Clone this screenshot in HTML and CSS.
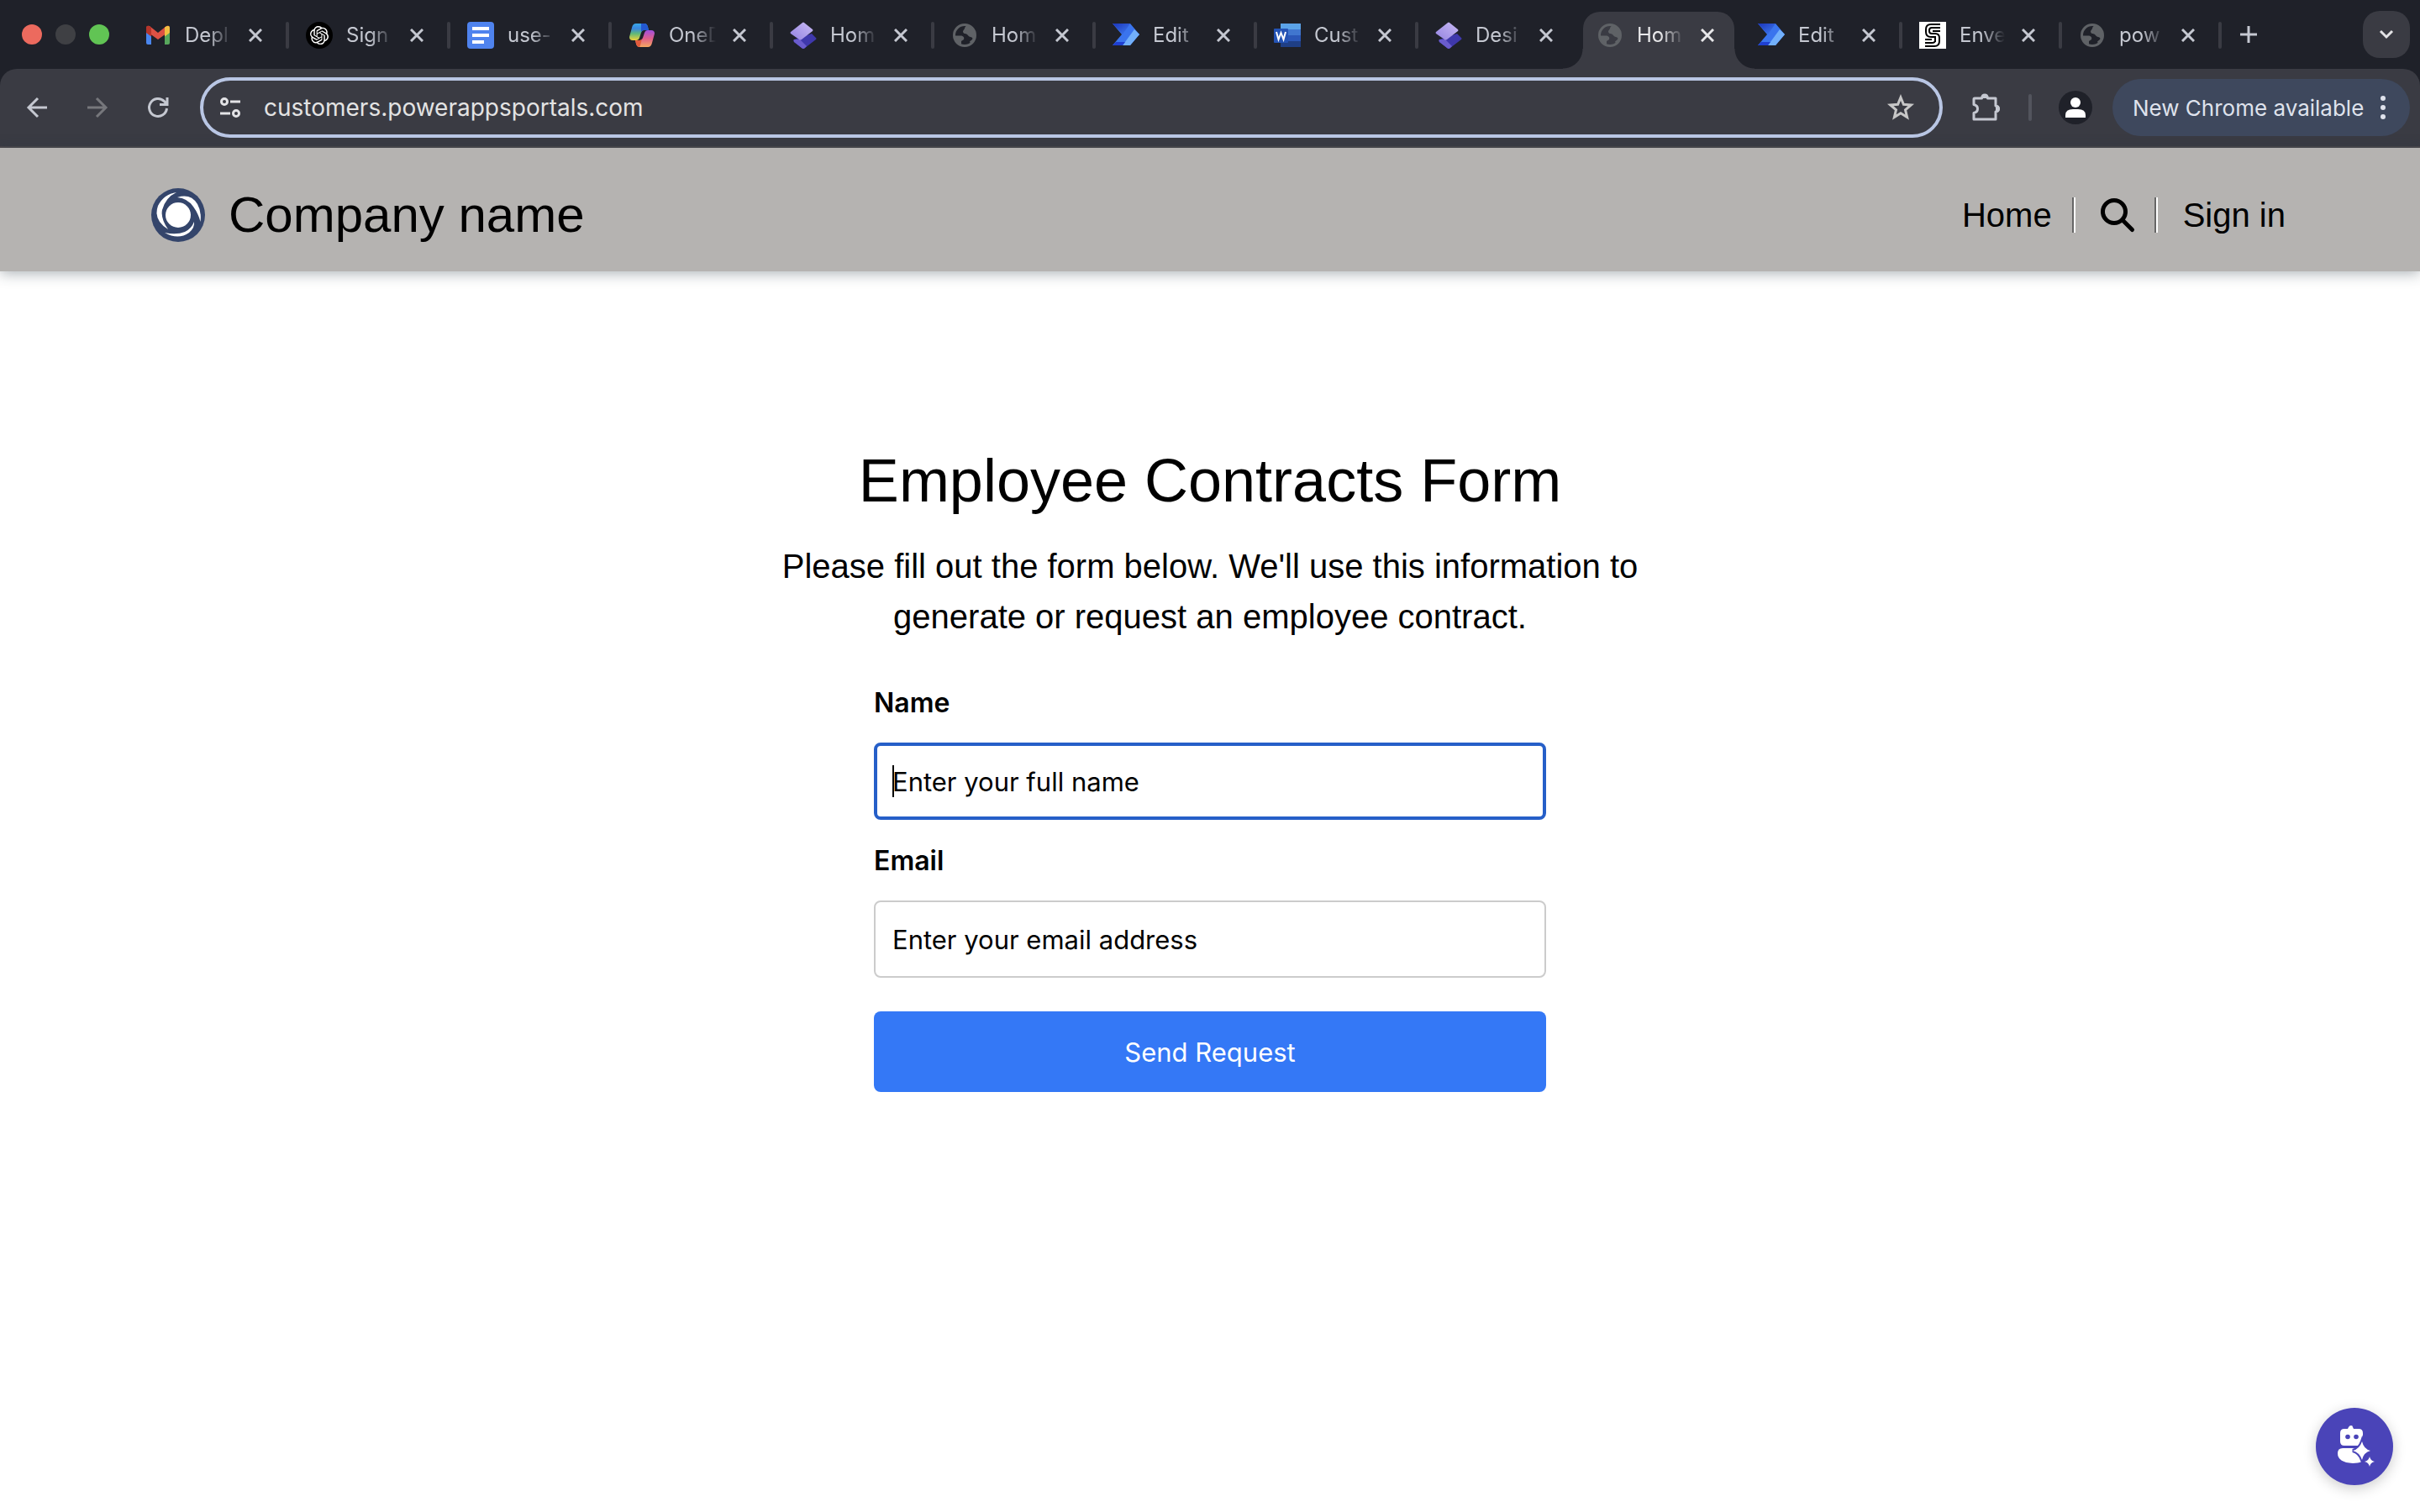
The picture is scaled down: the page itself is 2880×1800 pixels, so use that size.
FILE: index.html
```html
<!DOCTYPE html>
<html lang="en">
<head>
<meta charset="utf-8">
<title>Home · Company name</title>
<link rel="stylesheet" href="styles.css">
</head>
<body>
<svg class="defs" aria-hidden="true">
  <defs>
    <linearGradient id="copilot-a" x1="0" y1="0" x2="0" y2="1"><stop offset="0" stop-color="#38a9e8"/><stop offset=".3" stop-color="#3a86e0"/><stop offset=".6" stop-color="#5fb878"/><stop offset="1" stop-color="#f0d23a"/></linearGradient>
    <linearGradient id="copilot-b" x1="0" y1="0" x2="0" y2="1"><stop offset="0" stop-color="#a04fe0"/><stop offset=".5" stop-color="#e0608a"/><stop offset="1" stop-color="#f5a860"/></linearGradient>
    <linearGradient id="pages-a" x1="0" y1="1" x2="1" y2="0"><stop offset="0" stop-color="#9383e0"/><stop offset="1" stop-color="#c9baf5"/></linearGradient>
    <linearGradient id="flow-a" x1="0" y1="0" x2="1" y2="1"><stop offset="0" stop-color="#1b34b8"/><stop offset="1" stop-color="#3f7df2"/></linearGradient>
    <symbol id="close" viewBox="0 0 16 16"><path d="M1 1l14 14M15 1L1 15" fill="none" stroke="currentColor" stroke-width="3"/></symbol>
    <symbol id="globe" viewBox="0 0 32 32"><circle cx="16" cy="16" r="12.5" fill="none" stroke="#5f6266" stroke-width="3"/><path d="M3.5 16.500H11c3 0 5 1.500 4 4.500l-3 2v5.500C7 27 3.500 22 3.500 16.500zM19 4.500c-2 .5-3 2-3 3.500l-2 3c0 3 2 3 4 3.500 2 .5 2 3 5 3.500 2 .3 3 1.500 2 3l-3 2.500 1 2c4-2 6-6 6-10C29 10 25 5 19 4.500z" fill="#5f6266"/></symbol>
    <symbol id="pages" viewBox="0 0 32 32"><path d="M26 14l5 5q1 1 0 2L18 31q-2 2-4 0L5 24q-1-2 0-3z" fill="#3f38ac"/><path d="M5 21h7l8 8-2 2q-2 2-4 0L5 24q-1-2 0-3z" fill="#6a5ccd"/><path d="M15 1q1-1 2 0l10 8q1 1 0 2L14 21q-2 1-3 0L1 14q-1-1 0-2z" fill="url(#pages-a)"/></symbol>
    <symbol id="flow" viewBox="0 0 32 32"><path d="M0 2h21l11 13-11 13H0l11-13z" fill="#3a74ee"/><path d="M0 2h21l-9 13z" fill="url(#flow-a)"/><path d="M26 9l6 6-11 13H12z" fill="#72b0fb"/><path d="M0 28h12l3-4H4z" fill="#1f3fd0"/></symbol>
  </defs>
</svg>

<header class="browser">
  <div class="tabstrip">
    <div class="lights"><span class="light light-close"></span><span class="light light-min"></span><span class="light light-max"></span></div>
    <ul class="tabs">
      <li class="tab"><svg class="favicon" viewBox="0 0 32 32"><path d="M2 8v17q0 2 2 2h4V12z" fill="#4a86ee"/><path d="M30 8v17q0 2-2 2h-4V12z" fill="#57a75c"/><path d="M2 8q0-4 4-3l10 8 10-8q4-1 4 3v3L16 21 2 11z" fill="#dd5144"/><path d="M24 6.500q6-4 6 1.500v5l-6 4.500z" fill="#f2bf42"/><path d="M8 6.500Q2 2.500 2 8v5l6 4.500z" fill="#b5352b"/></svg><span class="tab-title">Depl</span><button class="tab-close" aria-label="Close tab"><svg><use href="#close"/></svg></button></li>
      <li class="tab"><svg class="favicon" viewBox="0 0 32 32"><circle cx="16" cy="16" r="16" fill="#000"/><path transform="translate(5 5) scale(.92)" fill="#fff" d="M22.2819 9.8211a5.9847 5.9847 0 0 0-.5157-4.9108 6.0462 6.0462 0 0 0-6.5098-2.9A6.0651 6.0651 0 0 0 4.9807 4.1818a5.9847 5.9847 0 0 0-3.9977 2.9 6.0462 6.0462 0 0 0 .7427 7.0966 5.98 5.98 0 0 0 .511 4.9107 6.051 6.051 0 0 0 6.5146 2.9001A5.9847 5.9847 0 0 0 13.2599 24a6.0557 6.0557 0 0 0 5.7718-4.2058 5.9894 5.9894 0 0 0 3.9977-2.9001 6.0557 6.0557 0 0 0-.7475-7.073zm-9.022 12.6081a4.4755 4.4755 0 0 1-2.8764-1.0408l.1419-.0804 4.7783-2.7582a.7948.7948 0 0 0 .3927-.6813v-6.7369l2.02 1.1686a.071.071 0 0 1 .038.052v5.5826a4.504 4.504 0 0 1-4.4945 4.4944zm-9.6607-4.1254a4.4708 4.4708 0 0 1-.5346-3.0137l.142.0852 4.783 2.7582a.7712.7712 0 0 0 .7806 0l5.8428-3.3685v2.3324a.0804.0804 0 0 1-.0332.0615L9.74 19.9502a4.4992 4.4992 0 0 1-6.1408-1.6464zM2.3408 7.8956a4.485 4.485 0 0 1 2.3655-1.9728V11.6a.7664.7664 0 0 0 .3879.6765l5.8144 3.3543-2.0201 1.1685a.0757.0757 0 0 1-.071 0l-4.8303-2.7865A4.504 4.504 0 0 1 2.3408 7.872zm16.5963 3.8558L13.1038 8.364 15.1192 7.2a.0757.0757 0 0 1 .071 0l4.8303 2.7913a4.4944 4.4944 0 0 1-.6765 8.1042v-5.6772a.79.79 0 0 0-.407-.667zm2.0107-3.0231l-.142-.0852-4.7735-2.7818a.7759.7759 0 0 0-.7854 0L9.409 9.2297V6.8974a.0662.0662 0 0 1 .0284-.0615l4.8303-2.7866a4.4992 4.4992 0 0 1 6.6802 4.66zM8.3065 12.863l-2.02-1.1638a.0804.0804 0 0 1-.038-.0567V6.0742a4.4992 4.4992 0 0 1 7.3757-3.4537l-.142.0805L8.704 5.459a.7948.7948 0 0 0-.3927.6813zm1.0976-2.3654l2.602-1.4998 2.6069 1.4998v2.9994l-2.5974 1.4997-2.6067-1.4997Z"/></svg><span class="tab-title">Sign</span><button class="tab-close" aria-label="Close tab"><svg><use href="#close"/></svg></button></li>
      <li class="tab"><svg class="favicon" viewBox="0 0 32 32"><rect width="32" height="32" rx="4" fill="#4f83ee"/><path d="M6 8h20M6 16h20M6 24h14" stroke="#fff" stroke-width="4"/></svg><span class="tab-title">use-</span><button class="tab-close" aria-label="Close tab"><svg><use href="#close"/></svg></button></li>
      <li class="tab"><svg class="favicon" viewBox="0 0 32 32"><path d="M9 2h10q3 0 4 4l1 4h-6q-2 0-3 3l-2 6q-1 3-4 3H5q-4 0-4-4L4 7q1-5 5-5z" fill="url(#copilot-a)"/><path d="M15 2h4q3 0 4 4l1 4h-6q-2 0-3 2z" fill="#2358d0"/><path d="M23 30H13q-3 0-4-4l-1-4h5q3 0 4-3l2-6q1-3 4-3h4q4 0 4 4l-3 11q-1 5-5 5z" fill="url(#copilot-b)"/><path d="M8 22h5q2 0 3-2l-2 8-1 2q-3 0-4-4z" fill="#e25b3c"/></svg><span class="tab-title">OneD</span><button class="tab-close" aria-label="Close tab"><svg><use href="#close"/></svg></button></li>
      <li class="tab"><svg class="favicon"><use href="#pages"/></svg><span class="tab-title">Hom</span><button class="tab-close" aria-label="Close tab"><svg><use href="#close"/></svg></button></li>
      <li class="tab"><svg class="favicon"><use href="#globe"/></svg><span class="tab-title">Hom</span><button class="tab-close" aria-label="Close tab"><svg><use href="#close"/></svg></button></li>
      <li class="tab"><svg class="favicon"><use href="#flow"/></svg><span class="tab-title">Edit</span><button class="tab-close" aria-label="Close tab"><svg><use href="#close"/></svg></button></li>
      <li class="tab"><svg class="favicon" viewBox="0 0 32 32"><path d="M8 2h24v7H8z" fill="#5ba3e8"/><path d="M8 9h24v7H8z" fill="#4076cf"/><path d="M8 16h24v7H8z" fill="#2b57b8"/><path d="M8 23h24v7H8z" fill="#1f3f86"/><rect y="8" width="17" height="17" rx="1" fill="#2453b4"/><path d="M3 12l2.500 9 3-8 3 8L14 12" fill="none" stroke="#fff" stroke-width="2"/></svg><span class="tab-title">Cust</span><button class="tab-close" aria-label="Close tab"><svg><use href="#close"/></svg></button></li>
      <li class="tab tab-plain"><svg class="favicon"><use href="#pages"/></svg><span class="tab-title">Desi</span><button class="tab-close" aria-label="Close tab"><svg><use href="#close"/></svg></button></li>
      <li class="tab tab-plain tab-active"><svg class="favicon"><use href="#globe"/></svg><span class="tab-title">Hom</span><button class="tab-close" aria-label="Close tab"><svg><use href="#close"/></svg></button></li>
      <li class="tab"><svg class="favicon"><use href="#flow"/></svg><span class="tab-title">Edit</span><button class="tab-close" aria-label="Close tab"><svg><use href="#close"/></svg></button></li>
      <li class="tab tab-narrow"><svg class="favicon" viewBox="0 0 32 32"><path d="M0 0h32v32H0z" fill="#fff"/><g fill="none" stroke="#000" stroke-width="2"><path d="M25 3H14q-6 0-6 6v3q0 6 6 6h5v6M25 7H15q-3 0-3 3v1q0 3 3 3h4q5 0 5 5v4q0 6-6 6H7M25 11h-9M7 25h8q4 0 4-3M7 21h8"/></g></svg><span class="tab-title">Enve</span><button class="tab-close" aria-label="Close tab"><svg><use href="#close"/></svg></button></li>
      <li class="tab tab-narrow"><svg class="favicon"><use href="#globe"/></svg><span class="tab-title">pow</span><button class="tab-close" aria-label="Close tab"><svg><use href="#close"/></svg></button></li>
    </ul>
    <button class="new-tab" aria-label="New tab"><svg viewBox="0 0 20 20"><path d="M10 0v20M0 10h20" stroke="currentColor" stroke-width="3"/></svg></button>
    <button class="tab-search" aria-label="Search tabs"><svg viewBox="0 0 16 10"><path d="M1 1l7 7 7-7" fill="none" stroke="currentColor" stroke-width="3"/></svg></button>
  </div>

  <div class="toolbar">
    <div class="nav-buttons">
      <button class="nav-button" aria-label="Back"><svg viewBox="0 0 24 24"><path d="M24 12H2M13 1L2 12l11 11" fill="none" stroke="currentColor" stroke-width="3"/></svg></button>
      <button class="nav-button nav-disabled" aria-label="Forward"><svg viewBox="0 0 24 24"><path d="M0 12h22M11 1l11 11-11 11" fill="none" stroke="currentColor" stroke-width="3"/></svg></button>
      <button class="nav-button" aria-label="Reload"><svg viewBox="0 0 24 24"><path d="M22.500 13A10.500 10.500 0 1 1 19.500 4.600L22 7.500M23 0v8.500h-9" fill="none" stroke="currentColor" stroke-width="3"/></svg></button>
    </div>
    <div class="address">
      <svg class="tune" viewBox="0 0 24 24" aria-hidden="true"><g fill="none" stroke="currentColor" stroke-width="3"><circle cx="5" cy="5" r="3.500"/><path d="M12 5h12M0 19h12"/><circle cx="19" cy="19" r="3.500"/></g></svg>
      <input class="url" type="text" aria-label="Address" value="customers.powerappsportals.com">
      <button class="star" aria-label="Bookmark this page"><svg viewBox="0 0 32 32"><path d="M16 4l3.400 8.300 8.900.7-6.800 5.800 2.100 8.700L16 22.800l-7.600 4.700 2.100-8.700L3.700 13l8.900-.7z" fill="none" stroke="currentColor" stroke-width="3"/></svg></button>
    </div>
    <button class="extensions" aria-label="Extensions"><svg viewBox="0 0 34 34"><path d="M4 6h8.500q.500-4 3.500-4t3.500 4H29v9q3.500.5 3.500 3.500T29 22v9H3v-7.500q4.500-1 4.500-5T3 13.500V7q0-1 1-1z" fill="none" stroke="currentColor" stroke-width="3" stroke-linejoin="round"/><path d="M12.500 6q0-5 3.500-5t3.500 5zM29 15q5 0 5 3.500T29 22z" fill="currentColor"/></svg></button>
    <span class="divider"></span>
    <button class="profile" aria-label="Profile"><svg viewBox="0 0 24 24"><circle cx="12" cy="6" r="6" fill="#fff"/><path d="M0 24v-3q0-7 9-7h6q9 0 9 7v3z" fill="#fff"/></svg></button>
    <button class="update">New Chrome available<svg viewBox="0 0 6 28"><circle cx="3" cy="3" r="3"/><circle cx="3" cy="14" r="3"/><circle cx="3" cy="25" r="3"/></svg></button>
  </div>
</header>

<div class="site-header">
  <a class="brand" href="#"><svg class="logo" viewBox="0 0 64 64"><circle cx="32" cy="32" r="32" fill="#34456b"/><circle cx="32" cy="32" r="15" fill="#fff"/><g fill="#fff"><path d="M30 5Q15 7 8 21q-6 17 12 28Q11 36 13 26 17 11 30 5z"/><path d="M31 11Q47 6 55 19q5 9 3.500 21Q56 30 50 22 43 12 31 11z"/><path d="M16 53q14 3 24-1 8-4 11-12 1 7-6 13-13 9-29 0z"/></g></svg><span class="brand-name">Company name</span></a>
  <nav class="site-nav">
    <a class="nav-link" href="#">Home</a>
    <span class="nav-rule"></span>
    <button class="nav-search" aria-label="Search"><svg viewBox="0 0 40 40"><circle cx="16" cy="16" r="13.500" fill="none" stroke="#000" stroke-width="5"/><path d="M26 26l11.500 11.500" stroke="#000" stroke-width="5" stroke-linecap="round"/></svg></button>
    <span class="nav-rule"></span>
    <a class="nav-link nav-signin" href="#">Sign in</a>
  </nav>
</div>

<main class="page">
  <h1 class="title">Employee Contracts Form</h1>
  <p class="intro">Please fill out the form below. We'll use this information to generate or request an employee contract.</p>
  <form class="form">
    <label class="label" for="name">Name</label>
    <input class="field" id="name" type="text" placeholder="Enter your full name" autofocus>
    <label class="label" for="email">Email</label>
    <input class="field" id="email" type="email" placeholder="Enter your email address">
    <button class="submit" type="submit">Send Request</button>
  </form>
</main>

<button class="chat" aria-label="Open chat"><svg viewBox="0 0 44 48"><g fill="#fff"><path d="M12 3l1-2q1-2 3-2t2 2l1 2h6q5 0 5 5v10q0 5-5 5H8q-5 0-5-5V8q0-5 5-5z"/><path d="M6 26h24v16q-6 2-12 2Q0 43 0 32q0-6 6-6z"/></g><circle cx="12" cy="12.500" r="2.800" fill="#4a44b8"/><circle cx="22" cy="12.500" r="2.800" fill="#4a44b8"/><path d="M29 18q2 9 10 11-8 2-10 11-3-9-11-11 8-2 11-11z" fill="#fff" stroke="#4a44b8" stroke-width="4" paint-order="stroke"/><path d="M38 36q1 5 6 6-5 1-6 6-1-5-6-6 5-1 6-6z" fill="#fff"/></svg></button>
</body>
</html>
```
FILE: styles.css
```css
* { box-sizing: border-box; }

body {
  margin: 0;
  min-height: 100vh;
  background: #fff;
  color: #000;
  font-family: "Liberation Sans", Arial, sans-serif;
}

button {
  padding: 0;
  border: 0;
  background: none;
  color: inherit;
  font: inherit;
}

svg { display: block; overflow: visible; }
.defs { position: absolute; width: 0; height: 0; }

/* Browser window */
.browser {
  background: #1f2129;
  color: #c5c8d1;
  font-family: Inter, sans-serif;
}

.tabstrip {
  display: flex;
  align-items: center;
  height: 82px;
  padding: 0 12px 0 26px;
}

.lights { display: flex; flex: none; gap: 16px; width: 124px; }
.light { width: 24px; height: 24px; border-radius: 50%; }
.light-close { background: #ec6a5e; }
.light-min { background: #3f4044; }
.light-max { background: #61c454; }

.tabs {
  display: flex;
  flex: 0 1 2492px;
  align-self: stretch;
  min-width: 0;
  margin: 0;
  padding: 0;
  list-style: none;
}

.tab {
  position: relative;
  display: flex;
  flex: 0 1 192px;
  align-items: center;
  gap: 16px;
  min-width: 0;
  padding: 2px 30px 0 22px;
}
.tab-narrow { flex-basis: 190px; }
.tab::after {
  content: "";
  position: absolute;
  top: 26px;
  right: -2px;
  width: 4px;
  height: 32px;
  border-radius: 2px;
  background: #3a3b43;
}
.tab-plain::after { display: none; }

.tab-active { z-index: 1; color: #e8e8ea; }
.tab-active::before {
  content: "";
  position: absolute;
  z-index: -1;
  inset: 14px 6px 0;
  border-radius: 20px 20px 0 0;
  background: #3a3b43;
}
.tab-active::after {
  display: block;
  z-index: -1;
  top: auto;
  right: -18px;
  bottom: 0;
  left: -18px;
  width: auto;
  height: 24px;
  border-radius: 0;
  background:
    radial-gradient(circle at 0 0, transparent 23px, #3a3b43 24px) left / 24px 24px no-repeat,
    radial-gradient(circle at 100% 0, transparent 23px, #3a3b43 24px) right / 24px 24px no-repeat;
}

.favicon { flex: none; width: 32px; height: 32px; }
.tab-title {
  flex: 1;
  min-width: 0;
  font-size: 24px;
  line-height: 32px;
  white-space: nowrap;
  -webkit-mask-image: linear-gradient(to right, #000 50%, transparent);
  mask-image: linear-gradient(to right, #000 50%, transparent);
}
.tab-close { flex: none; margin-left: 4px; }
.tab-close svg { width: 16px; height: 16px; }

.new-tab { flex: none; margin-left: 24px; }
.new-tab svg { width: 20px; height: 20px; }
.tab-search {
  display: grid;
  flex: none;
  place-items: center;
  width: 56px;
  height: 56px;
  margin-left: auto;
  border-radius: 20px;
  background: #3a3b43;
  color: #e3e3e6;
}
.tab-search svg { width: 16px; height: 10px; }

.toolbar {
  display: flex;
  align-items: center;
  height: 94px;
  padding: 0 12px 0 32px;
  border-bottom: 2px solid #4b484c;
  border-radius: 20px 20px 0 0;
  background: #3a3b43;
}

.nav-buttons { display: flex; flex: none; gap: 48px; margin-right: 38px; }
.nav-button svg { width: 24px; height: 24px; }
.nav-disabled { color: #76777c; }

.address {
  display: flex;
  flex: 1;
  align-items: center;
  min-width: 0;
  height: 72px;
  padding: 0 30px 0 20px;
  border: 4px solid #b9c6e4;
  border-radius: 36px;
}
.tune { flex: none; width: 24px; height: 24px; color: #e3e3e6; }
.url {
  flex: 1;
  min-width: 0;
  margin-left: 28px;
  padding: 0;
  border: 0;
  outline: 0;
  background: none;
  color: #e3e3e3;
  font-family: Inter, sans-serif;
  font-size: 28px;
}
.star { color: #c7c7c7; }
.star svg { width: 32px; height: 32px; }

.extensions { flex: none; margin-left: 34px; }
.extensions svg { width: 34px; height: 34px; }
.divider {
  flex: none;
  width: 4px;
  height: 32px;
  margin: 0 32px 0 34px;
  border-radius: 2px;
  background: #52545d;
}
.profile {
  display: grid;
  flex: none;
  place-items: center;
  width: 40px;
  height: 40px;
  border-radius: 50%;
  background: #1f2129;
}
.profile svg { width: 24px; height: 24px; }
.update {
  display: flex;
  flex: none;
  align-items: center;
  justify-content: space-between;
  width: 354px;
  height: 68px;
  margin-left: 24px;
  padding: 0 29px 0 24px;
  border-radius: 34px;
  background: #3e485d;
  color: #dfe2ec;
  font-size: 26px;
}
.update svg { width: 6px; height: 28px; fill: currentColor; }

/* Site header */
.site-header {
  display: flex;
  align-items: center;
  justify-content: space-between;
  height: 147px;
  padding: 12px 160px 0 180px;
  background: #b5b3b1;
  box-shadow: 0 2px 16px rgba(37, 52, 64, .4);
}
.site-header a { color: #000; text-decoration: none; }

.brand { display: flex; align-items: center; gap: 28px; }
.logo { width: 64px; height: 64px; }
.brand-name { font-size: 60px; line-height: 72px; }

.site-nav { display: flex; align-items: center; }
.nav-link { font-size: 40px; line-height: 48px; }
.nav-rule {
  width: 4px;
  height: 42px;
  margin: 0 24px;
  border-left: 2px solid #666;
  background: #fff;
}
.nav-search { padding: 0 0 0 6px; }
.nav-search svg { width: 40px; height: 40px; }
.nav-signin { margin-left: 6px; }

/* Form page */
.page {
  display: flex;
  flex-direction: column;
  align-items: center;
  padding: 204px 40px 80px;
}
.title { margin: 0; font-size: 72px; font-weight: 400; line-height: 90px; }
.intro {
  max-width: 1040px;
  margin: 27px 0 0;
  font-size: 40px;
  line-height: 60px;
  text-align: center;
}
.form {
  display: flex;
  flex-direction: column;
  width: 100%;
  max-width: 800px;
  margin-top: 49px;
  font-family: Inter, sans-serif;
  font-size: 31px;
}
.label { font-size: 32px; line-height: 48px; font-weight: 600; }
.field {
  height: 92px;
  margin: 23px 0 25px;
  padding: 0 20px;
  border: 2px solid #ccc;
  border-radius: 8px;
  background: #fff;
  font: inherit;
}
.field::placeholder { color: #000; opacity: 1; }
.field:focus {
  padding: 0 18px;
  border: 4px solid #265fc8;
  outline: 0;
  background: linear-gradient(#000, #000) 18px 50% / 2px 38px no-repeat #fff;
  caret-color: transparent;
}
.submit {
  height: 96px;
  margin-top: 15px;
  border-radius: 8px;
  background: #3478f6;
  color: #fff;
}

.chat {
  position: fixed;
  right: 32px;
  bottom: 32px;
  display: grid;
  place-items: center;
  width: 92px;
  height: 92px;
  padding-left: 4px;
  border-radius: 50%;
  background: #4a44b8;
  box-shadow: 0 4px 16px rgba(0, 0, 0, .2);
}
.chat svg { width: 44px; height: 48px; }
```
